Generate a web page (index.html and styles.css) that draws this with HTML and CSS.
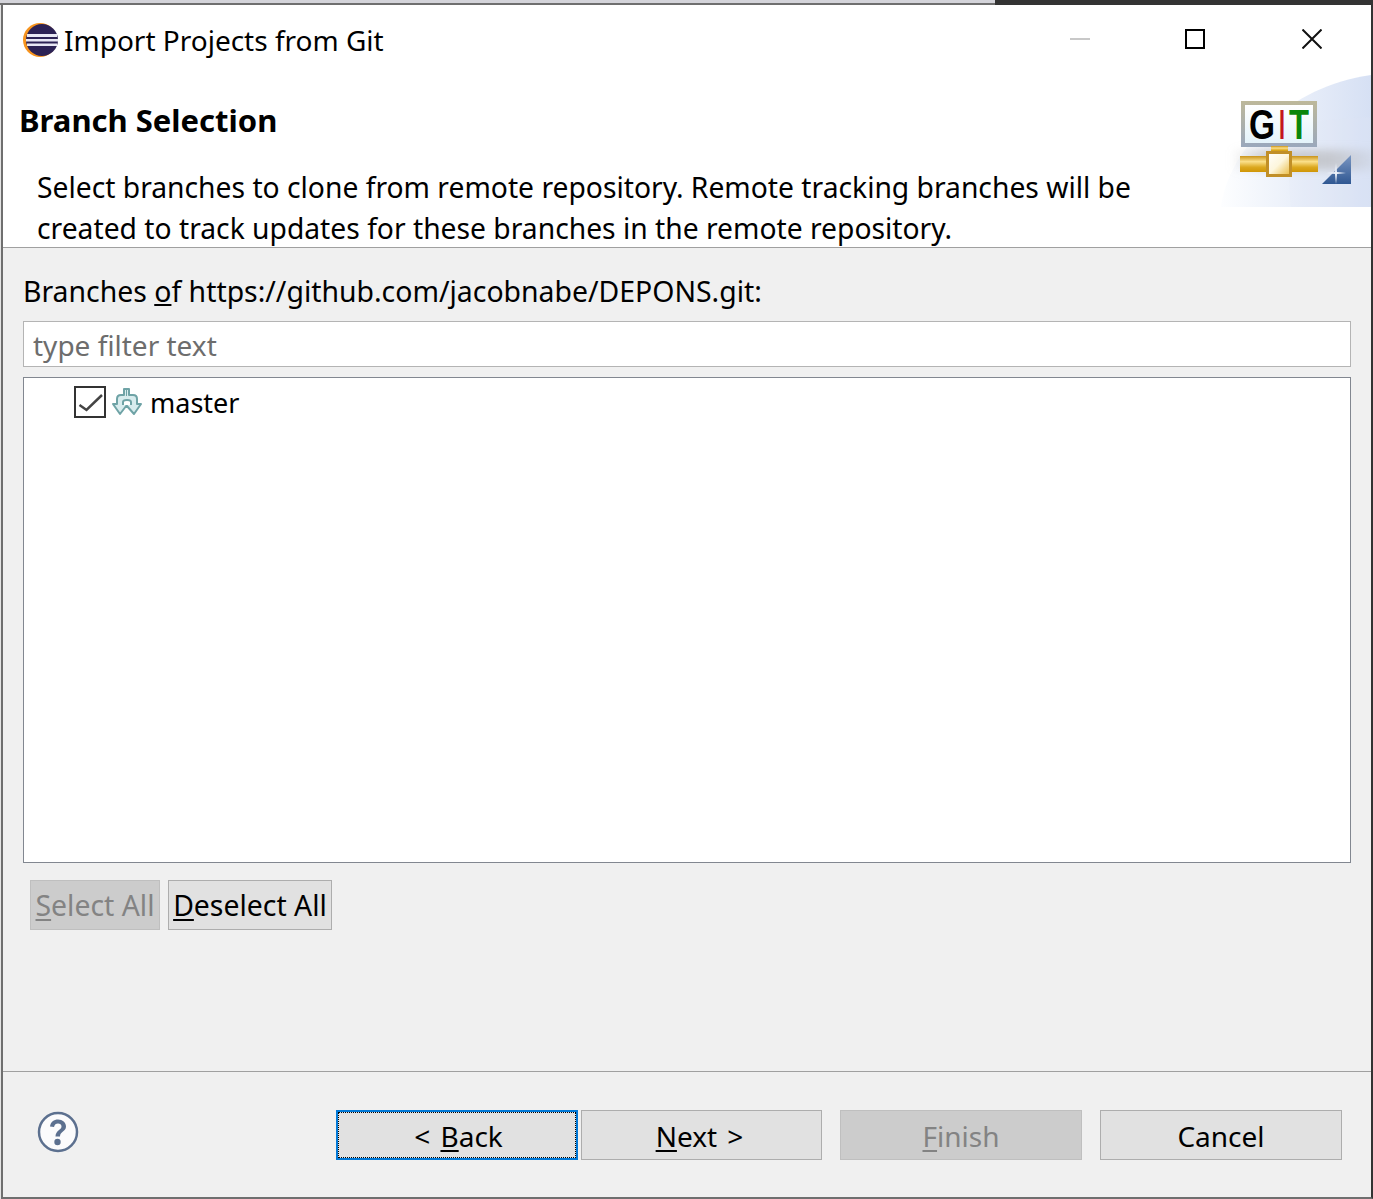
FILE: index.html
```html
<!DOCTYPE html>
<html lang="en">
<head>
<meta charset="utf-8">
<title>Import Projects from Git</title>
<link rel="stylesheet" href="styles.css">
</head>
<body>
<div class="desk-top"><div class="desk-light"></div><div class="desk-dark"></div></div>
<div class="window">
  <header class="titlebar">
    <svg class="app-icon" width="36" height="36" viewBox="0 0 36 36">
      <circle cx="17" cy="18" r="17" fill="#f7941e"/>
      <circle cx="19" cy="18" r="16" fill="#2c2255"/>
      <rect x="4" y="12" width="30" height="3" fill="#e8e8f4"/>
      <rect x="3" y="17" width="32" height="2.500" fill="#e8e8f4"/>
      <rect x="4" y="21.500" width="30" height="2.500" fill="#e8e8f4"/>
    </svg>
    <span class="title-text">Import Projects from Git</span>
    <div class="win-controls">
      <svg class="win-btn" width="20" height="20" viewBox="0 0 20 20"><path d="M0 10H20" stroke="#c8c8c8" stroke-width="2"/></svg>
      <svg class="win-btn" width="20" height="20" viewBox="0 0 20 20"><rect x="1" y="1" width="18" height="18" fill="none" stroke="#000" stroke-width="2"/></svg>
      <svg class="win-btn win-close" width="20" height="20" viewBox="0 0 20 20"><path d="M0.500 0.500L19.500 19.500M19.500 0.500L0.500 19.500" stroke="#111" stroke-width="2"/></svg>
    </div>
  </header>
  <section class="banner">
    <svg class="banner-art" width="151" height="132" viewBox="0 0 151 132">
      <defs>
        <linearGradient id="wave" x1="0" y1="0" x2="1" y2="0">
          <stop offset="0" stop-color="#fdfeff"/><stop offset="1" stop-color="#d6e0f4"/>
        </linearGradient>
        <linearGradient id="frame" x1="0" y1="0" x2="0" y2="1">
          <stop offset="0" stop-color="#bdb89a"/><stop offset="1" stop-color="#9aa8bc"/>
        </linearGradient>
        <linearGradient id="screen" x1="0" y1="0" x2="0" y2="1">
          <stop offset="0" stop-color="#fff"/><stop offset="1" stop-color="#e4f3fa"/>
        </linearGradient>
        <linearGradient id="pipe" x1="0" y1="0" x2="0" y2="1">
          <stop offset="0" stop-color="#c9931a"/><stop offset=".35" stop-color="#fbe08a"/><stop offset=".7" stop-color="#dca81f"/><stop offset="1" stop-color="#cf9505"/>
        </linearGradient>
        <linearGradient id="box" x1="0" y1="0" x2="1" y2="1">
          <stop offset="0" stop-color="#fff"/><stop offset=".5" stop-color="#fdf6dc"/><stop offset="1" stop-color="#e9b93c"/>
        </linearGradient>
        <linearGradient id="tri" x1="0" y1="0" x2="0" y2="1">
          <stop offset="0" stop-color="#7b97c2"/><stop offset="1" stop-color="#2f5792"/>
        </linearGradient>
        <linearGradient id="shadow" x1="0" y1="0" x2="1" y2="0">
          <stop offset="0" stop-color="#b0b0b0" stop-opacity="0"/><stop offset=".25" stop-color="#b0b0b0" stop-opacity=".6"/><stop offset=".7" stop-color="#b0b0b0" stop-opacity=".55"/><stop offset="1" stop-color="#b0b0b0" stop-opacity=".12"/>
        </linearGradient>
        <filter id="soft" x="-10%" y="-60%" width="130%" height="220%"><feGaussianBlur stdDeviation="4"/></filter>
      </defs>
      <g transform="translate(1,0)">
        <path d="M0 132C6 80 62 12 150 0V132Z" fill="url(#wave)"/>
        <path d="M76 49C100 45 125 43 150 42V132H70C66 100 70 65 76 49Z" fill="#dfe6f5" opacity=".2"/>
        <rect x="10" y="75" width="145" height="20" fill="url(#shadow)" filter="url(#soft)"/>
        <rect x="20" y="26" width="76" height="46" fill="url(#frame)"/>
        <rect x="24" y="30" width="68" height="38" fill="url(#screen)"/>
        <text x="28" y="64" class="git-g" textLength="26" lengthAdjust="spacingAndGlyphs">G</text>
        <text x="58" y="64" class="git-i" textLength="6" lengthAdjust="spacingAndGlyphs">I</text>
        <text x="68" y="64" class="git-t" textLength="20" lengthAdjust="spacingAndGlyphs">T</text>
        <rect x="50" y="71" width="17" height="6" fill="url(#pipe)"/>
        <rect x="19" y="81" width="78" height="16" fill="url(#pipe)"/>
        <rect x="46.500" y="77.500" width="23" height="23" fill="url(#box)" stroke="#c18f27" stroke-width="3"/>
        <path d="M101 109L130 80V109Z" fill="url(#tri)"/>
        <path d="M115 88L116 97L125 98L116 99L115 109L114 99L105 98L114 97Z" fill="#eef2fa"/>
      </g>
    </svg>
    <h1 class="banner-title">Branch Selection</h1>
    <p class="banner-desc">Select branches to clone from remote repository. Remote tracking branches will be<br>created to track updates for these branches in the remote repository.</p>
  </section>
  <main class="content">
    <label class="branches-label">Branches <u>o</u>f https://github.com/jacobnabe/DEPONS.git:</label>
    <input class="filter" type="text" placeholder="type filter text">
    <div class="tree">
      <div class="tree-row">
        <span class="check"><svg width="27" height="27" viewBox="0 0 27 27"><path d="M2.500 16L9.500 21L25 6" fill="none" stroke="#444" stroke-width="2.500"/></svg></span>
        <svg class="branch-icon" width="30" height="28" viewBox="0 0 30 28">
          <path d="M12 1V7H9C6.500 7 5 8.500 5 11V16H1L8 26L14.500 17.500L22 26L29 16H25V11C25 8.500 23.500 7 21 7H17V1Z" fill="#d8ecee" stroke="#6fa3a6" stroke-width="2" stroke-linejoin="round"/>
          <path d="M14.500 2V8" stroke="#6fa3a6" stroke-width="1"/>
          <path d="M11 17V14C11 12.500 12.500 12 15 12C17.500 12 19 12.500 19 14V17" fill="#fff" stroke="#6fa3a6" stroke-width="2"/>
        </svg>
        <span class="branch-name">master</span>
      </div>
    </div>
    <div class="select-buttons">
      <button class="btn btn-disabled btn-select" disabled><u>S</u>elect All</button>
      <button class="btn btn-deselect"><u>D</u>eselect All</button>
    </div>
  </main>
  <footer class="footer">
    <svg class="help" width="42" height="42" viewBox="0 0 42 42">
      <circle cx="21" cy="21" r="19" fill="#fbfbfc" stroke="#5c708f" stroke-width="2.500"/>
      <path d="M13 15.500C13.500 11 17 8.500 21 8.500C25.500 8.500 29 11.500 29 15.500C29 20.500 23 20.500 23 25.500H18.500C18.500 19.500 24.500 19 24.500 15.500C24.500 13.500 23 12.500 21 12.500C19 12.500 17.500 13.500 17 16Z" fill="#5c708f"/>
      <circle cx="20.500" cy="31" r="3.200" fill="#5c708f"/>
    </svg>
    <div class="nav-buttons">
      <button class="btn btn-nav btn-focus"><span class="focus-ring">&lt; <u>B</u>ack</span></button>
      <button class="btn btn-nav btn-next"><u>N</u>ext &gt;</button>
      <button class="btn btn-nav btn-disabled btn-finish" disabled><u>F</u>inish</button>
      <button class="btn btn-nav btn-cancel">Cancel</button>
    </div>
  </footer>
</div>
</body>
</html>
```
FILE: styles.css
```css
* { box-sizing: border-box; }
html, body { margin: 0; padding: 0; }
body {
  width: 1373px;
  height: 1199px;
  overflow: hidden;
  background: #e4e4e4;
  font-family: "Noto Sans", "Open Sans", sans-serif;
  font-size: 28px;
  color: #000;
}
.desk-top { display: flex; height: 5px; }
.desk-light { width: 995px; background: #d4d4da; border-bottom: 2px solid #6f6f6f; }
.desk-dark { flex: 1; background: #333; }
.window {
  margin-left: 1px;
  height: 1194px;
  display: flex;
  flex-direction: column;
  border-left: 2px solid #6f6f6f;
  border-bottom: 2px solid #6f6f6f;
  border-right: 2px solid #333;
  background: #f0f0f0;
}
.titlebar {
  height: 70px;
  flex: none;
  display: flex;
  align-items: center;
  background: #fff;
  padding: 0 49px 0 20px;
}
.app-icon { flex: none; }
.title-text { margin-left: 5px; font-size: 28px; line-height: 36px; }
.win-controls { margin-left: auto; margin-bottom: 2px; display: flex; gap: 95px; }
.win-close { margin-left: 2px; }
.banner {
  position: relative;
  flex: none;
  height: 173px;
  background: #fff;
  border-bottom: 1px solid #a0a0a0;
  padding: 23px 0 0 16px;
}
.banner-art { position: absolute; right: 0; top: 0; }
.git-g, .git-i, .git-t { font-family: "Liberation Sans", sans-serif; font-size: 42px; font-weight: 700; }
.git-g { fill: #000; }
.git-i { fill: #c4161c; }
.git-t { fill: #0a860a; }
.banner-title { margin: 0; font-size: 31px; line-height: 44px; font-weight: 700; }
.banner-desc { margin: 25px 0 0 18px; font-size: 28.25px; line-height: 41px; }
.content { flex: 1; display: flex; flex-direction: column; padding: 0 20px; }
.branches-label { display: block; height: 73px; line-height: 86px; font-size: 28.4px; }
.filter {
  display: block;
  width: 100%;
  height: 46px;
  flex: none;
  border: 1px solid #b4b4b4;
  background: #fff;
  padding: 2px 9px 0;
  font: inherit;
  outline: none;
}
.filter::placeholder { color: #6d6d6d; opacity: 1; }
.tree {
  margin-top: 10px;
  height: 486px;
  flex: none;
  background: #fff;
  border: 1px solid #828790;
}
.tree-row { display: flex; align-items: center; height: 48px; padding-left: 50px; }
.check {
  flex: none;
  width: 32px; height: 32px;
  border: 2.500px solid #333;
  background: #fff;
  display: flex; align-items: center; justify-content: center;
}
.branch-icon { margin-left: 6px; flex: none; }
.branch-name { margin-left: 8px; font-size: 27px; }
.select-buttons { display: flex; gap: 8px; margin: 17px 0 0 7px; }
.btn {
  height: 50px;
  padding: 0;
  font: inherit;
  color: #000;
  background: #e1e1e1;
  border: 1px solid #adadad;
}
.btn u { text-underline-offset: 3px; }
.btn-disabled { background: #cccccc; border-color: #bfbfbf; color: #838383; }
.btn-select { width: 130px; font-size: 28.4px; }
.btn-deselect { width: 164px; font-size: 28.4px; }
.footer {
  flex: none;
  margin-top: auto;
  height: 126px;
  border-top: 1px solid #a0a0a0;
  display: flex;
  padding: 38px 29px 0 34px;
}
.help { flex: none; margin-top: 1px; }
.nav-buttons { margin-left: auto; display: flex; }
.btn-nav { width: 241px; padding-top: 2px; word-spacing: 3px; }
.btn-focus { width: 242px; border: 2px solid #0078d7; padding: 0; }
.focus-ring {
  display: flex; align-items: center; justify-content: center;
  white-space: pre;
  height: 100%;
  padding: 2px 0 0 3px;
  border: 1px dotted #000;
}
.btn-next { margin-left: 3px; padding-right: 4px; }
.btn-finish { margin-left: 18px; width: 242px; }
.btn-cancel { margin-left: 18px; width: 242px; }
```
